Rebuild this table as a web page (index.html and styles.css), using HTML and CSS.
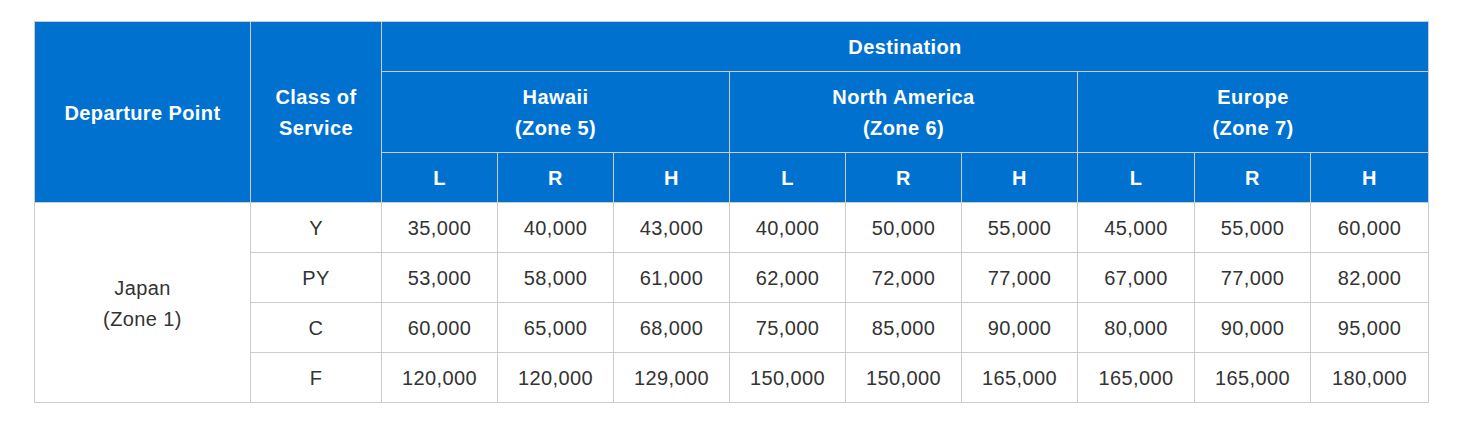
FILE: index.html
```html
<!DOCTYPE html>
<html lang="en">
<head>
<meta charset="utf-8">
<title>Award chart</title>
<link rel="stylesheet" href="styles.css">
</head>
<body>
<table class="chart">
  <colgroup>
    <col class="c-dep">
    <col class="c-cls">
    <col class="c-n"><col class="c-n"><col class="c-n">
    <col class="c-n"><col class="c-n"><col class="c-n">
    <col class="c-n7"><col class="c-n"><col class="c-n9">
  </colgroup>
  <thead>
    <tr>
      <th rowspan="3">Departure Point</th>
      <th rowspan="3">Class of<br>Service</th>
      <th colspan="9">Destination</th>
    </tr>
    <tr>
      <th colspan="3">Hawaii<br>(Zone 5)</th>
      <th colspan="3">North America<br>(Zone 6)</th>
      <th colspan="3">Europe<br>(Zone 7)</th>
    </tr>
    <tr>
      <th>L</th><th>R</th><th>H</th>
      <th>L</th><th>R</th><th>H</th>
      <th>L</th><th>R</th><th>H</th>
    </tr>
  </thead>
  <tbody>
    <tr>
      <td rowspan="4">Japan<br>(Zone 1)</td>
      <td>Y</td>
      <td>35,000</td><td>40,000</td><td>43,000</td>
      <td>40,000</td><td>50,000</td><td>55,000</td>
      <td>45,000</td><td>55,000</td><td>60,000</td>
    </tr>
    <tr>
      <td>PY</td>
      <td>53,000</td><td>58,000</td><td>61,000</td>
      <td>62,000</td><td>72,000</td><td>77,000</td>
      <td>67,000</td><td>77,000</td><td>82,000</td>
    </tr>
    <tr>
      <td>C</td>
      <td>60,000</td><td>65,000</td><td>68,000</td>
      <td>75,000</td><td>85,000</td><td>90,000</td>
      <td>80,000</td><td>90,000</td><td>95,000</td>
    </tr>
    <tr>
      <td>F</td>
      <td>120,000</td><td>120,000</td><td>129,000</td>
      <td>150,000</td><td>150,000</td><td>165,000</td>
      <td>165,000</td><td>165,000</td><td>180,000</td>
    </tr>
  </tbody>
</table>
</body>
</html>
```
FILE: styles.css
```css
html, body {
  margin: 0;
  padding: 0;
  background: #fff;
}
body {
  padding: 21px 0 0 34px;
  font-family: "Liberation Sans", Arial, sans-serif;
  font-size: 20px;
  color: #333;
}
.chart {
  border-collapse: collapse;
  table-layout: fixed;
  width: 1395px;
}
.c-dep { width: 216px; }
.c-cls { width: 131px; }
.c-n { width: 116px; }
.c-n7 { width: 117px; }
.c-n9 { width: 118px; }
.chart th,
.chart td {
  border: 1px solid #cccccc;
  padding: 10px 2px 8px;
  line-height: 31px;
  text-align: center;
  vertical-align: middle;
  font-weight: normal;
  letter-spacing: 0.4px;
  white-space: nowrap;
}
.chart th {
  background: #0071ce;
  color: #fff;
  font-weight: bold;
}
.chart td {
  background: #fff;
  color: #333;
}
```
